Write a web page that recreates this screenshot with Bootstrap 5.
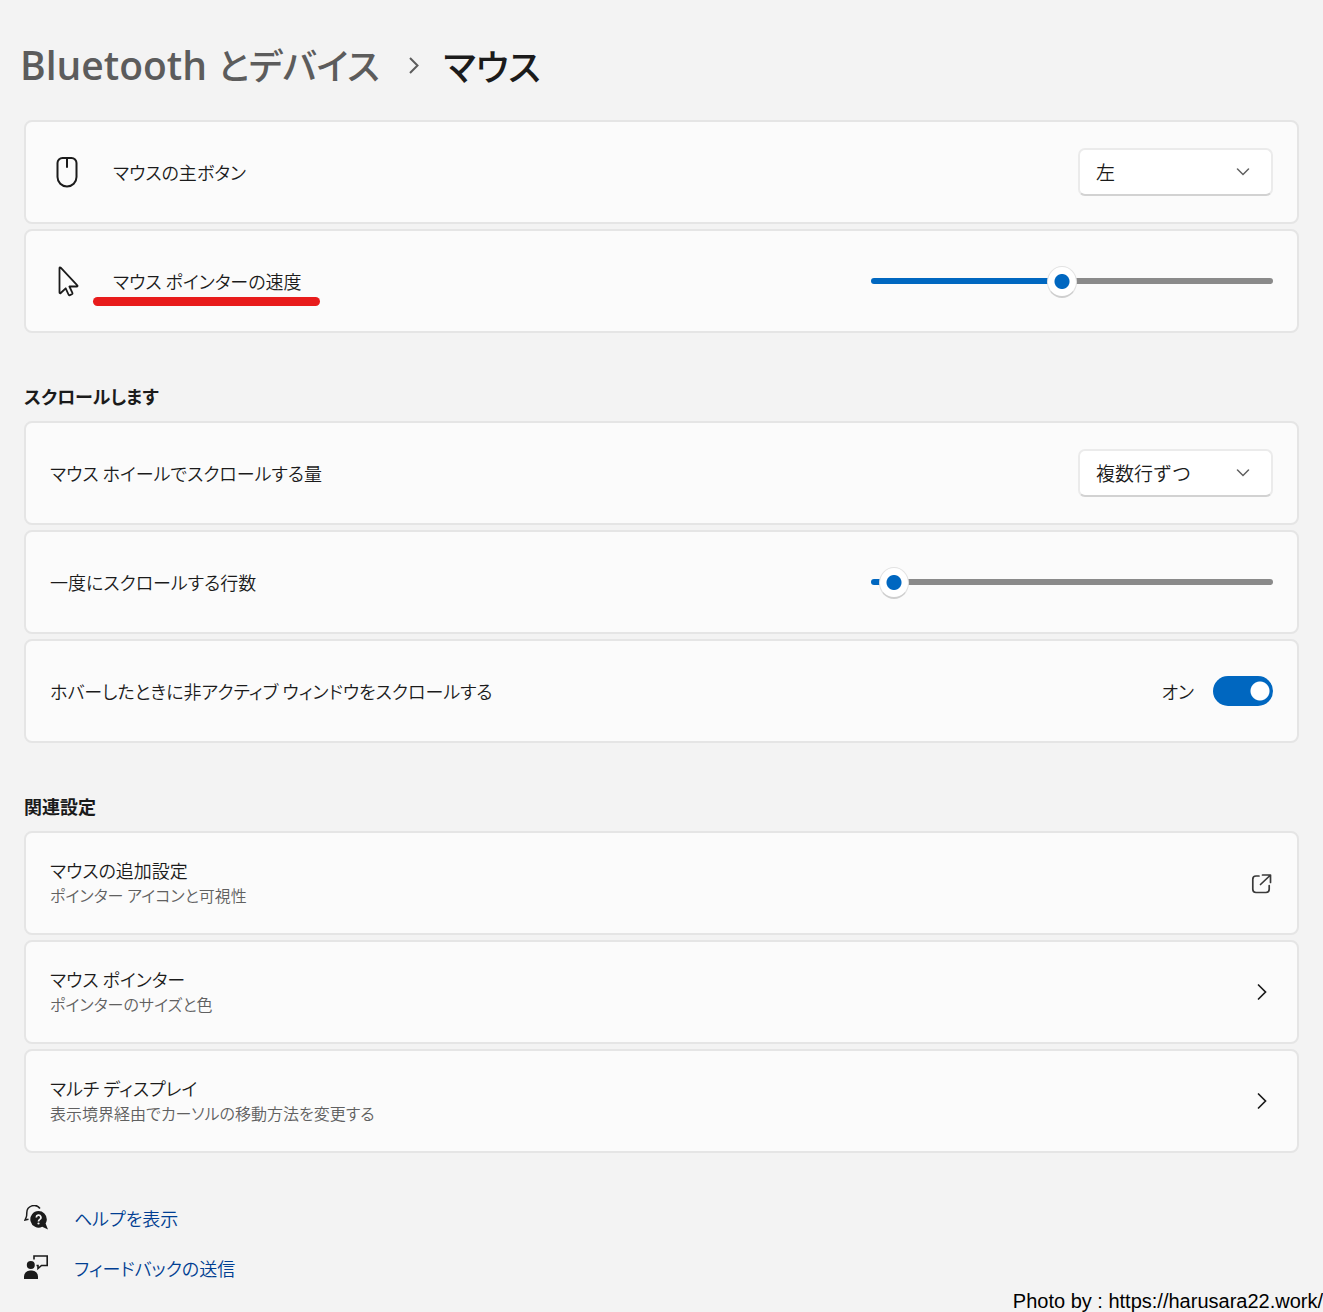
<!DOCTYPE html>
<html lang="ja">
<head>
<meta charset="utf-8">
<meta name="viewport" content="width=device-width, initial-scale=1">
<title>Bluetooth とデバイス › マウス</title>
<link href="https://cdn.jsdelivr.net/npm/bootstrap@5.3.0/dist/css/bootstrap.min.css" rel="stylesheet">
<style>
  :root { --accent: #0067c0; --ink: #1b1b1b; --ink-soft: #606060; --line: #e5e5e5; }
  body {
    background: #f3f3f3; color: var(--ink);
    font-family: "Noto Sans CJK JP", sans-serif; font-weight: 350;
    font-size: 18px; line-height: 25px; font-feature-settings: "palt";
  }
  .page-title { font-size: 36px; line-height: 56px; font-weight: 500; padding: 36px 20px 0; margin-bottom: 27px; }
  .page-title a { color: #5c5c5c; }
  .page-title .latin { font-family: "Open Sans", sans-serif; font-size: 39px; font-weight: 600; }
  .page-title .crumb-sep { margin: 0 24px 0 28px; }
  .settings-group { gap: 5px; padding: 0 24px; }
  .setting { background: #fbfbfb; border: 2px solid var(--line); border-radius: 8px; min-height: 104px; padding: 0 24px; color: var(--ink); }
  .setting-icon { width: 34px; margin-right: 29px; }
  .section-title { font-size: 18px; line-height: 32px; font-weight: 700; margin: 47px 24px 9px; }
  .setting-note { font-size: 16px; color: var(--ink-soft); }
  .underlined::after { content: ""; position: absolute; left: -20px; top: 28px; width: 227px; height: 9px; border-radius: 5px; background: #e81c1c; }
  .form-select {
    width: 195px; height: 48px; padding: 0 40px 0 16px; font-size: 19px; font-weight: 350; color: var(--ink);
    background-color: #fff; border: 2px solid #ebebeb; border-bottom-color: #d2d2d2; border-radius: 7px;
    background-image: url("data:image/svg+xml,%3Csvg xmlns='http://www.w3.org/2000/svg' viewBox='0 0 14 8'%3E%3Cpath fill='none' stroke='%23606060' stroke-width='1.5' stroke-linecap='round' d='M1.500 1l5.500 5.500 5.500-5.500'/%3E%3C/svg%3E");
    background-size: 14px 8px; background-position: right 21px center;
  }
  .form-range { width: 402px; height: 32px; }
  .form-range::-webkit-slider-runnable-track { height: 6px; border-radius: 3px; background: linear-gradient(to right, var(--accent) var(--fill), #8a8a8a var(--fill)); }
  .form-range::-webkit-slider-thumb { width: 30px; height: 32px; margin-top: -12px; border: 1px solid #e2e2e2; border-bottom: 2px solid #cfcfcf; border-radius: 50%; background: radial-gradient(circle, var(--accent) 7px, #fff 8px); }
  .form-range::-webkit-slider-thumb:active { background: radial-gradient(circle, var(--accent) 6px, #fff 7px); }
  .form-switch { gap: 19px; min-height: 0; }
  .form-switch .form-check-input { width: 60px; height: 30px; border: 0; }
  .form-switch .form-check-input:checked { background: radial-gradient(circle at 47px 15px, #fff 9px, var(--accent) 10px); }
  .help-links { gap: 20px; padding: 0 24px; margin-top: 50px; }
  .help-links a { color: #003e92; line-height: 30px; gap: 25px; }
  .credit { font-family: "Liberation Sans", sans-serif; font-size: 20px; font-weight: 400; line-height: 22px; color: #000; margin-top: 7px; }
  svg { flex: none; }
</style>
</head>
<body>
<header>
  <nav aria-label="パンくずリスト">
    <h1 class="page-title d-flex align-items-center">
      <a href="#" class="text-decoration-none"><span class="latin">Bluetooth </span>とデバイス</a>
      <svg class="crumb-sep" width="12" height="18" viewBox="0 0 12 18" fill="none" stroke="#5c5c5c" stroke-width="2" aria-hidden="true"><path d="M2 2l7.500 7.500L2 17"/></svg>
      <span aria-current="page">マウス</span>
    </h1>
  </nav>
</header>
<main>
  <section class="settings-group d-flex flex-column">
    <div class="setting d-flex align-items-center">
      <span class="setting-icon d-flex justify-content-center"><svg width="24" height="32" viewBox="0 0 24 32" fill="none" stroke="#1b1b1b" stroke-width="2" stroke-linecap="round" aria-hidden="true"><path d="M7.500 2h9a5 5 0 0 1 5 5v14a9.500 9.500 0 0 1-19 0V7a5 5 0 0 1 5-5zM12 2v9"/></svg></span>
      <label for="primary">マウスの主ボタン</label>
      <select id="primary" class="form-select ms-auto"><option>左</option><option>右</option></select>
    </div>
    <div class="setting d-flex align-items-center">
      <span class="setting-icon d-flex justify-content-center"><svg width="24" height="32" viewBox="0 0 24 32" fill="none" stroke="#1b1b1b" stroke-width="1.800" stroke-linejoin="round" aria-hidden="true"><path d="M4.500 3v24.500c0 .8.700 1 1.200.5l5-4.700 2.800 6.200c.3.700.8.900 1.400.6l2-.9c.6-.3.800-.8.500-1.400l-3-6.300h7.300c.9 0 1.100-.7.600-1.200L5.700 2.700C5.200 2.200 4.500 2.400 4.500 3z"/></svg></span>
      <label for="speed" class="position-relative underlined">マウス ポインターの速度</label>
      <input id="speed" type="range" class="form-range ms-auto" min="1" max="20" value="10" style="--fill:47.5%">
    </div>
  </section>

  <h2 class="section-title">スクロールします</h2>
  <section class="settings-group d-flex flex-column">
    <div class="setting d-flex align-items-center">
      <label for="wheel">マウス ホイールでスクロールする量</label>
      <select id="wheel" class="form-select ms-auto"><option>複数行ずつ</option><option>1 画面ずつ</option></select>
    </div>
    <div class="setting d-flex align-items-center">
      <label for="lines">一度にスクロールする行数</label>
      <input id="lines" type="range" class="form-range ms-auto" min="1" max="100" value="3" style="--fill:5.5%">
    </div>
    <div class="setting d-flex align-items-center">
      <label for="hover">ホバーしたときに非アクティブ ウィンドウをスクロールする</label>
      <div class="form-check form-switch d-flex align-items-center ms-auto mb-0 p-0">
        <label for="hover">オン</label>
        <input id="hover" type="checkbox" role="switch" class="form-check-input m-0" checked>
      </div>
    </div>
  </section>

  <h2 class="section-title">関連設定</h2>
  <section class="settings-group d-flex flex-column">
    <a href="#" class="setting d-flex align-items-center text-decoration-none">
      <span class="d-flex flex-column"><span>マウスの追加設定</span><span class="setting-note">ポインター アイコンと可視性</span></span>
      <svg class="ms-auto" width="22" height="22" viewBox="0 0 22 22" fill="none" stroke="#3a3a3a" stroke-width="1.700" stroke-linecap="round" stroke-linejoin="round" aria-hidden="true"><path d="M8 4H5A3.200 3.200 0 0 0 1.800 7.200v10.100A3.200 3.200 0 0 0 5 20.500h10a3.200 3.200 0 0 0 3.200-3.200V13.500M11.500 3h8v7.500M19 3.500L9.500 12.500"/></svg>
    </a>
    <a href="#" class="setting d-flex align-items-center text-decoration-none">
      <span class="d-flex flex-column"><span>マウス ポインター</span><span class="setting-note">ポインターのサイズと色</span></span>
      <svg class="ms-auto" width="22" height="18" viewBox="0 0 22 18" fill="none" stroke="#1b1b1b" stroke-width="1.700" stroke-linecap="round" aria-hidden="true"><path d="M7.500 2l7 7-7 7"/></svg>
    </a>
    <a href="#" class="setting d-flex align-items-center text-decoration-none">
      <span class="d-flex flex-column"><span>マルチ ディスプレイ</span><span class="setting-note">表示境界経由でカーソルの移動方法を変更する</span></span>
      <svg class="ms-auto" width="22" height="18" viewBox="0 0 22 18" fill="none" stroke="#1b1b1b" stroke-width="1.700" stroke-linecap="round" aria-hidden="true"><path d="M7.500 2l7 7-7 7"/></svg>
    </a>
  </section>
</main>
<footer>
  <div class="help-links d-flex flex-column align-items-start">
    <a href="#" class="d-flex align-items-center text-decoration-none">
      <svg width="25" height="26" viewBox="0 0 25 26" aria-hidden="true"><path d="M16 3.500A7.300 7.300 0 0 0 2.800 8c0 2-.1 3.300-.7 4.500L1 15l3.500-.8" fill="none" stroke="#1b1b1b" stroke-width="1.500"/><path d="M14.500 6a8.300 8.300 0 0 1 8.300 8.300c0 1.700-.5 3-1.200 4.200L24 24.500l-5.800-2.700A8.300 8.300 0 1 1 14.500 6z" fill="#1b1b1b"/><path d="M12.300 12.500a2.300 2.300 0 1 1 3.500 1.900c-.9.600-1.300 1-1.300 2" fill="none" stroke="#f3f3f3" stroke-width="1.700"/><circle cx="14.500" cy="18.500" r="1.100" fill="#f3f3f3"/></svg>
      ヘルプを表示
    </a>
    <a href="#" class="d-flex align-items-center text-decoration-none">
      <svg width="25" height="26" viewBox="0 0 25 26" aria-hidden="true"><path d="M10 4.500V1h13.200v9.500h-5.700L14 13.500v-3h-1.500" fill="none" stroke="#1b1b1b" stroke-width="1.600"/><circle cx="6.800" cy="10" r="4" fill="#1b1b1b"/><path d="M0 24v-2.500A6 6 0 0 1 6 15.500h2a6 6 0 0 1 6 6V24z" fill="#1b1b1b"/></svg>
      フィードバックの送信
    </a>
  </div>
  <div class="credit text-end">Photo by : https://harusara22.work/</div>
</footer>
<script src="https://cdn.jsdelivr.net/npm/bootstrap@5.3.0/dist/js/bootstrap.bundle.min.js"></script>
</body>
</html>
